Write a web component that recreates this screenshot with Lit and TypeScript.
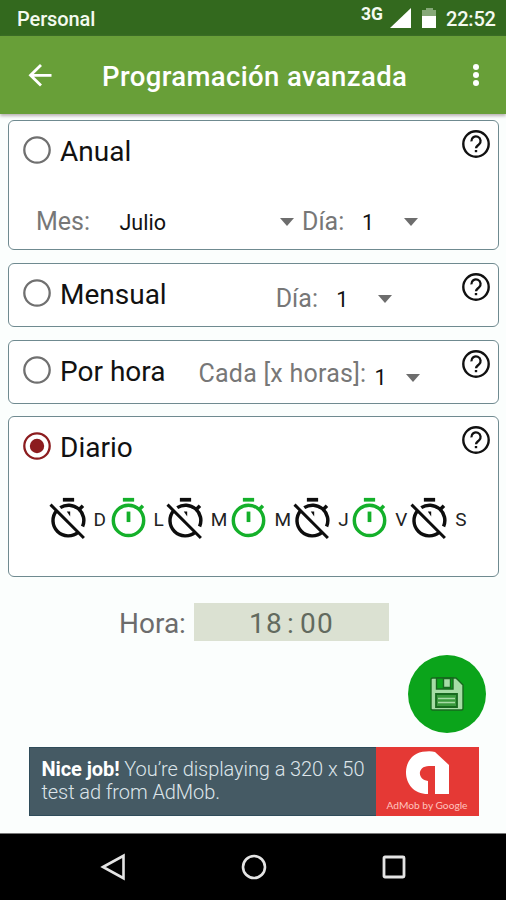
import { LitElement, html, css, svg } from "lit";
import { customElement, property } from "lit/decorators.js";

@customElement("timer-icon")
class TimerIcon extends LitElement {
  @property({ type: Boolean }) on = false;

  static styles = css`
    :host { display: block; width: 45px; height: 45px; color: #0d0d0d; }
    :host([on]) { color: #14b02a; }
    svg { display: block; fill: none; stroke: currentColor; stroke-width: 1.85; }
  `;

  render() {
    return html`<svg width="45" height="45" viewBox="0 0 24 24">
      <path d="M9 2h6" stroke-width="2" />
      <path d="M17.7 7.2l2-2" stroke-width="1.9" />
      ${this.on
        ? svg`<circle cx="12" cy="13" r="8.1" /><path d="M12 8.3v5.600" stroke-width="2" />`
        : svg`<path d="M7.6 6.2A8.15 8.15 0 0 1 19.5 16.3" />
            <path d="M5.7 7.8A8.15 8.15 0 0 0 17.3 19.2" />
            <path d="M2.4 4.6L20.2 22.4" stroke-width="1.6" />
            <path d="M11.1 8.3h1.8v2.6z" fill="currentColor" stroke="none" />`}
    </svg>`;
  }
}

@customElement("option-card")
class OptionCard extends LitElement {
  @property() label = "";
  @property({ type: Boolean }) checked = false;

  static styles = css`
    :host {
      display: block; box-sizing: border-box; background: #fff;
      border: 1.5px solid #6f8a90; border-radius: 6px;
    }
    .head { display: flex; align-items: flex-start; padding: 0 8.5px 0 14px; height: 62px; }
    svg { display: block; flex: none; }
    .radio { margin-top: 14.5px; color: #707070; }
    .radio.checked { color: #8c1c1f; }
    .label { margin: 17px 0 0 9px; font-size: 28px; line-height: 28px; color: #111; white-space: nowrap; }
    .inline { flex: 1; min-width: 0; }
    .help { margin-top: 9px; }
  `;

  render() {
    return html`
      <div class="head">
        <svg class="radio ${this.checked ? "checked" : ""}" width="28" height="28" fill="none" stroke="currentColor">
          <circle cx="14" cy="14" r="12.7" stroke-width="2.3" />
          ${this.checked ? svg`<circle cx="14" cy="14" r="7.2" fill="currentColor" stroke="none" />` : ""}
        </svg>
        <span class="label">${this.label}</span>
        <div class="inline"><slot name="inline"></slot></div>
        <svg class="help" width="28" height="28" viewBox="0 0 28 28" fill="none" stroke="#111">
          <circle cx="14" cy="14" r="12.7" stroke-width="2.4" />
          <path d="M9.400 11.3a4.600 4.600 0 1 1 7.5 3.2c-1.6 1.4-2.9 2-2.9 3.8" stroke-width="2.3" />
          <path d="M14 20v2.2" stroke-width="2.4" />
        </svg>
      </div>
      <slot></slot>
    `;
  }
}

const DAYS: [string, boolean][] = [
  ["D", false], ["L", true], ["M", false], ["M", true], ["J", false], ["V", true], ["S", false],
];

@customElement("app-root")
class AppRoot extends LitElement {
  static styles = css`
    :host {
      display: flex; flex-direction: column; width: 506px; height: 900px; overflow: hidden;
      background: #fbfefd; font-family: Roboto, "Liberation Sans", sans-serif; color: #111;
    }
    svg { display: block; flex: none; }
    .status {
      display: flex; align-items: flex-start; height: 36px; background: #33691e; color: #f4faf0;
      font-size: 20px; line-height: 24px; font-weight: 500; padding: 0 10px 0 17px; box-sizing: border-box;
    }
    .owner { margin-top: 7px; flex: 1; letter-spacing: -0.1px; }
    .net { font-size: 17.5px; line-height: 20px; margin-top: 4px; font-weight: 700; width: 29px; }
    .signal { margin: 8px 11px 0 0; }
    .battery { margin: 7px 9px 0 0; }
    .clock { margin-top: 7px; width: 50px; white-space: nowrap; letter-spacing: -0.2px; }
    .bar {
      display: flex; align-items: center; height: 78px; background: #689f38; color: #fff;
      box-shadow: 0 2px 3px #b9b1b4; padding: 0 22px 0 28px; position: relative;
    }
    h1 {
      margin: 4px 0 0; padding-left: 50px; flex: 1; font-size: 27.5px; line-height: 32px;
      font-weight: 500; letter-spacing: 0.38px; white-space: nowrap;
    }
    .cards { display: flex; flex-direction: column; padding: 6px 7px 0 8px; }
    .annual { height: 130px; }
    .monthly { height: 64px; margin-top: 13px; }
    .hourly { height: 64px; margin-top: 13px; }
    .daily { height: 161px; margin-top: 12px; }
    .fields { display: flex; align-items: center; }
    .caption { font-size: 25px; line-height: 30px; color: #777; white-space: nowrap; }
    .value { font-size: 21.5px; line-height: 26px; white-space: nowrap; }
    .annual .fields { padding: 24px 0 0 27px; }
    .annual .value, .monthly .value { padding-top: 2px; }
    .w-month { width: 83.5px; }
    .w-julio { width: 160.5px; }
    .w-day { width: 60px; }
    .w-num { width: 42px; }
    .gap { margin-right: 8px; }
    .monthly .fields { padding: 20px 0 0 109px; }
    .w-day2 { width: 60.5px; }
    .w-num2 { width: 41.5px; }
    .hourly .fields { padding: 15px 0 0 33px; }
    .w-every { width: 176px; letter-spacing: 0.25px; }
    .w-num3 { width: 32px; }
    .hourly .value { padding-top: 9px; }
    .hourly .arrow { margin-top: 8px; }
    .days { display: grid; grid-template-columns: 60px 57.3px 63.7px 63.7px 57px 60px 60px; padding: 17px 0 0 36.5px; }
    .day { display: flex; align-items: center; gap: 3px; font-size: 19px; line-height: 22px; color: #222; }
    .day span { padding-top: 2px; }
    .time { display: flex; align-items: center; height: 38px; margin-top: 26px; padding-left: 119px; }
    .hour { width: 75px; font-size: 28px; line-height: 32px; color: #6c6c6c; padding-top: 3px; box-sizing: border-box; white-space: nowrap; }
    .clockbox {
      width: 195px; height: 38px; background: #dbe1d2; color: #626a5e; font-size: 28px; line-height: 41px;
      text-align: center; letter-spacing: 1.3px;
    }
    .colon { padding: 0 5px 0 4px; }
    .fab {
      display: flex; align-items: center; justify-content: center; align-self: flex-end;
      width: 78px; height: 78px; border-radius: 50%; background: #0ba41b; margin: 13.500px 20px 0 0;
    }
    .ad { display: flex; width: 450px; height: 69px; margin: 14.500px 0 0 28.5px; background: #455a64; }
    .adtext {
      flex: 1; box-sizing: border-box; padding: 10px 0 0 12px; color: #dde5ea; font-size: 20px; line-height: 23px;
      font-weight: 300; letter-spacing: -0.08px; white-space: nowrap; border: 1px solid #2f4c5a; border-right: none;
    }
    .adtext b { font-weight: 700; color: #fff; }
    .admob { display: flex; flex-direction: column; align-items: center; width: 103px; background: #e53935; color: #ffc4bf; }
    .admob svg { margin-top: 4px; }
    .brand { font: 10.2px/14px Lato, sans-serif; margin-top: 4px; white-space: nowrap; }
    .nav {
      display: flex; justify-content: space-between; align-items: center; height: 66px; margin-top: auto;
      padding: 0 99px 0 100px; background: #000; border-top: 1px solid #777;
    }
  `;

  private arrow() {
    return html`<svg class="arrow" width="14" height="8"><path d="M0 0h14l-7 8z" fill="#6d6d6d" /></svg>`;
  }

  render() {
    return html`
      <div class="status">
        <span class="owner">Personal</span>
        <span class="net">3G</span>
        <svg class="signal" width="21" height="21"><path d="M0 20L21 0v20z" fill="#fff" /></svg>
        <svg class="battery" width="15" height="22">
          <path d="M4 1h7v2h3v7H0V3h4z" fill="#86a878" /><path d="M0 9h14v12H0z" fill="#fff" />
        </svg>
        <span class="clock">22:52</span>
      </div>
      <div class="bar">
        <svg width="24" height="24" fill="none" stroke="#fff" stroke-width="2.8">
          <path d="M13 2L2.5 12.3L13 22.6M2.5 12.3H23.5" />
        </svg>
        <h1>Programación avanzada</h1>
        <svg width="16" height="26" fill="#fff">
          <circle cx="8" cy="5" r="3" /><circle cx="8" cy="13" r="3" /><circle cx="8" cy="21" r="3" />
        </svg>
      </div>
      <div class="cards">
        <option-card class="annual" label="Anual">
          <div class="fields">
            <span class="caption w-month">Mes:</span><span class="value w-julio">Julio</span>
            <span class="gap">${this.arrow()}</span>
            <span class="caption w-day">Día:</span><span class="value w-num">1</span>${this.arrow()}
          </div>
        </option-card>
        <option-card class="monthly" label="Mensual">
          <div class="fields" slot="inline">
            <span class="caption w-day2">Día:</span><span class="value w-num2">1</span>${this.arrow()}
          </div>
        </option-card>
        <option-card class="hourly" label="Por hora">
          <div class="fields" slot="inline">
            <span class="caption w-every">Cada [x horas]:</span><span class="value w-num3">1</span>${this.arrow()}
          </div>
        </option-card>
        <option-card class="daily" label="Diario" checked>
          <div class="days">
            ${DAYS.map(([d, on]) => html`<div class="day"><timer-icon ?on=${on}></timer-icon><span>${d}</span></div>`)}
          </div>
        </option-card>
      </div>
      <div class="time">
        <span class="hour">Hora:</span>
        <div class="clockbox">18<span class="colon">:</span>00</div>
      </div>
      <div class="fab">
        <svg width="34" height="34" viewBox="0 0 34 34" fill="#a6dca6" stroke="#17691f" stroke-width="1.4">
          <path d="M1 2.5q0-1.5 1.5-1.5H26l7 7v23.5q0 1.5-1.5 1.5h-29Q1 33 1 31.5z" />
          <path d="M6.5 1H23v11H6.5z" fill="#0ba41b" />
          <path d="M13.5 1.5h7v9h-7z" />
          <path d="M6 17h21v13H6z" fill="#3a9a3e" stroke-width="1.8" />
          <path d="M8 21.5h17M8 25.5h17" stroke="#a6dca6" stroke-width="1.6" />
        </svg>
      </div>
      <div class="ad">
        <div class="adtext"><b>Nice job!</b> You’re displaying a 320 x 50<br />test ad from AdMob.</div>
        <div class="admob">
          <svg width="43" height="43" viewBox="0 0 43 43" fill="#fff">
            <path d="M29 1L43 14V43H29V15H23C11 15 11 29 22 30V43C-7 43-7 1 20 0.5Q25 0 29 1z" />
          </svg>
          <span class="brand">AdMob by Google</span>
        </div>
      </div>
      <div class="nav">
        <svg width="26" height="28" fill="none" stroke="#e4e4e4" stroke-width="2.6"><path d="M3 14L23.5 2.8V25.2z" /></svg>
        <svg width="26" height="26" fill="none" stroke="#e4e4e4" stroke-width="2.6"><circle cx="13" cy="13" r="11" /></svg>
        <svg width="26" height="26" fill="none" stroke="#e4e4e4" stroke-width="2.8"><rect x="3" y="3" width="20" height="20" rx="1" /></svg>
      </div>
    `;
  }
}
